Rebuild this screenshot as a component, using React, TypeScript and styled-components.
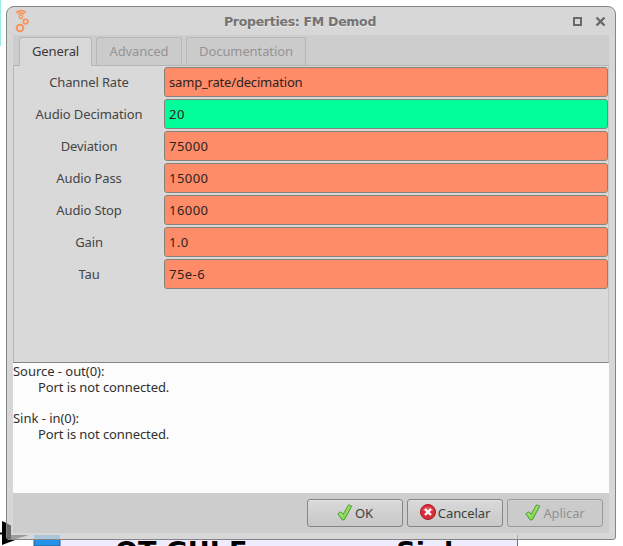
import React from 'react';
import styled, { createGlobalStyle } from 'styled-components';

const Global = createGlobalStyle`
  * { box-sizing: border-box; }
  body { margin: 0; background: #fff; overflow: hidden; font-family: "Noto Sans", sans-serif; }
`;

const Desktop = styled.div`
  position: relative;
  width: 623px;
  height: 546px;
  padding: 6px 7px 5px 6px;
  overflow: hidden;
  background: #fff;
`;

const Canvas = styled.svg`
  position: absolute;
  inset: 0;
  pointer-events: none;
`;

const BlockTitle = styled.span`
  position: absolute;
  left: 115px;
  top: 537px;
  font: bold 27px/30px "DejaVu Sans", sans-serif;
  letter-spacing: -0.03px;
  white-space: pre;
  color: #000;
`;

const Window = styled.section`
  position: relative;
  display: flex;
  flex-direction: column;
  width: 610px;
  height: 534px;
  padding: 0 6px 6px;
  border: 1px solid #858585;
  border-radius: 8px 8px 3px 3px;
  background: #d7d7d7;
`;

const TitleBar = styled.header`
  display: flex;
  align-items: center;
  height: 28px;
  flex: none;
`;

const AppIcon = styled.svg`
  flex: none;
  width: 20px;
  height: 24px;
`;

const Title = styled.h1`
  flex: 1;
  margin: 0;
  padding: 1px 4px 0 0;
  text-align: center;
  font: bold 12.5px/20px "DejaVu Sans", sans-serif;
  letter-spacing: -0.28px;
  color: #737373;
  text-shadow: 0 1px 0 #e8e8e8;
`;

const WindowControls = styled.svg`
  flex: none;
  width: 38px;
  height: 16px;
`;

const Tabs = styled.nav`
  display: flex;
  align-items: flex-end;
  gap: 4px;
  flex: none;
  height: 31px;
  padding-left: 6px;
  background: #cdcdcd;
  border-bottom: 1px solid #b5b5b5;
`;

const Tab = styled.button<{ $active?: boolean; $width: number }>`
  width: ${p => p.$width}px;
  height: ${p => (p.$active ? 29 : 28)}px;
  margin-bottom: ${p => (p.$active ? -1 : 0)}px;
  padding: 0 0 2px;
  border: 1px solid #b7b7b7;
  border-bottom: 0;
  border-radius: 3px 3px 0 0;
  background: ${p => (p.$active ? '#d9d9d9' : '#cbcbcb')};
  color: ${p => (p.$active ? '#393939' : '#949494')};
  font: 13px/20px "Noto Sans", sans-serif;
  letter-spacing: -0.1px;
`;

const Form = styled.div`
  display: flex;
  flex-direction: column;
  gap: 2px;
  flex: none;
  height: 297px;
  padding: 1px 0 0;
  border-left: 1px solid #b7b7b7;
  border-right: 1px solid #c4c4c4;
  border-bottom: 1px solid #858585;
  background: #d9d9d9;
`;

const Field = styled.label`
  display: grid;
  grid-template-columns: 150px 444px;
  height: 30px;
  align-items: center;
`;

const Label = styled.span`
  padding-bottom: 1px;
  text-align: center;
  font-size: 13px;
  line-height: 20px;
  letter-spacing: -0.12px;
  color: #454545;
`;

const Entry = styled.input<{ $fill: string; $numeric: boolean }>`
  width: 444px;
  height: 30px;
  margin: 0;
  padding: 0 4px 1px;
  border: 1px solid #86837c;
  border-radius: 3px;
  outline: none;
  background: ${p => p.$fill};
  color: #2d221d;
  font: 13px/20px "Noto Sans", sans-serif;
  letter-spacing: ${p => (p.$numeric ? 0.45 : -0.18)}px;
`;

const Messages = styled.div`
  flex: none;
  height: 130px;
  padding-top: 1px;
  background: #fcfcfc;
  color: #303030;
  font-size: 13px;
  line-height: 15.7px;
`;

const Message = styled.p<{ $indent?: boolean }>`
  margin: 0;
  padding-left: ${p => (p.$indent ? 25 : 0)}px;
  min-height: 15.7px;
  letter-spacing: ${p => (p.$indent ? -0.1 : -0.04)}px;
`;

const Actions = styled.footer`
  display: flex;
  justify-content: flex-end;
  gap: 4px;
  flex: 1;
  padding: 6px 6px 0;
  background: #cdcdcd;
`;

const ActionButton = styled.button<{ $muted?: boolean }>`
  display: flex;
  align-items: center;
  justify-content: center;
  gap: 2px;
  width: 96px;
  height: 28px;
  padding: 0;
  border: 1px solid ${p => (p.$muted ? '#999' : '#858585')};
  border-radius: 3px;
  background: ${p => (p.$muted ? '#cbcbcb' : 'linear-gradient(#d9d9d9, #c8c8c8)')};
  box-shadow: inset 0 1px 0 ${p => (p.$muted ? '#d2d2d2' : '#e1e1e1')};
  color: ${p => (p.$muted ? '#929292' : '#3e3e3e')};
  font: 13px/20px "Noto Sans", sans-serif;
  letter-spacing: -0.1px;
`;

const Glyph = styled.svg`
  flex: none;
  width: 16px;
  height: 18px;
`;

const CheckGlyph = () => (
  <Glyph viewBox="0 0 16 18">
    <defs>
      <linearGradient id="leaf" x1="0" y1="0" x2="1" y2="1">
        <stop offset="0" stopColor="#c8f79a" />
        <stop offset="1" stopColor="#5fc62a" />
      </linearGradient>
    </defs>
    <path d="M.9 9.8 3.8 7.8 6.1 10.4 11.6.9 14.7 2.2 7.4 15.7 5.2 16Z" fill="url(#leaf)" stroke="#4d9a2c" strokeLinejoin="round" />
  </Glyph>
);

const CancelGlyph = () => (
  <Glyph viewBox="0 0 16 18">
    <circle cx="8" cy="8" r="7.5" fill="#d52f3b" stroke="#a91a25" />
    <path d="M2.3 6.5a6 5 0 0 1 11.4 0Q8 8.5 2.3 6.5" fill="#ed6b6f" opacity=".65" />
    <path d="m5 5 6 6m0-6-6 6" stroke="#fff" strokeWidth="2.4" />
  </Glyph>
);

const CORAL = '#ff8c69';
const fields = [
  { label: 'Channel Rate', value: 'samp_rate/decimation', fill: CORAL },
  { label: 'Audio Decimation', value: '20', fill: '#00ff99' },
  { label: 'Deviation', value: '75000', fill: CORAL },
  { label: 'Audio Pass', value: '15000', fill: CORAL },
  { label: 'Audio Stop', value: '16000', fill: CORAL },
  { label: 'Gain', value: '1.0', fill: CORAL },
  { label: 'Tau', value: '75e-6', fill: CORAL },
];

export default function App() {
  return (
    <Desktop>
      <Global />
      <Canvas width="623" height="546">
        <path d="M0 0h1v46H0z" fill="#98efe8" />
        <path d="M34 535h483v11H34z" fill="#f0ecff" />
        <path d="M517.5 535v11" stroke="#6c6980" />
        <path d="M34 535h26v11H34z" fill="#2492ed" stroke="#315a8d" />
        <path d="M0 533.5h3" stroke="#000" strokeWidth="2" />
        <path d="M2 521 31 534 2 545Z" fill="#000" />
      </Canvas>
      <BlockTitle>QT GUI Frequency Sink</BlockTitle>
      <Window>
        <TitleBar>
          <AppIcon viewBox="0 0 20 24" fill="none" stroke="#f8935a">
            <path d="M3 3.8Q8-.6 13 3.8M5 5.4Q8 3 11 5.4" strokeWidth="1.7" />
            <circle cx="8" cy="7.8" r="1.7" strokeWidth="1.4" />
            <circle cx="12.6" cy="12.6" r="2.3" strokeWidth="1.7" />
            <circle cx="7" cy="19" r="3.3" strokeWidth="2.1" />
          </AppIcon>
          <Title>Properties: FM Demod</Title>
          <WindowControls viewBox="0 0 38 16" fill="none" stroke="#696969" strokeWidth="2">
            <path d="M3 5h7v7H3z" />
            <path d="m25.5 4.5 8 8m0-8-8 8" strokeWidth="2.4" />
          </WindowControls>
        </TitleBar>
        <Tabs>
          <Tab $active $width={73}>General</Tab>
          <Tab $width={86}>Advanced</Tab>
          <Tab $width={120}>Documentation</Tab>
        </Tabs>
        <Form>
          {fields.map(f => (
            <Field key={f.label}>
              <Label>{f.label}</Label>
              <Entry $fill={f.fill} $numeric={/^\d/.test(f.value)} defaultValue={f.value} />
            </Field>
          ))}
        </Form>
        <Messages>
          <Message>Source - out(0):</Message>
          <Message $indent>Port is not connected.</Message>
          <Message />
          <Message>Sink - in(0):</Message>
          <Message $indent>Port is not connected.</Message>
        </Messages>
        <Actions>
          <ActionButton><CheckGlyph />OK</ActionButton>
          <ActionButton><CancelGlyph />Cancelar</ActionButton>
          <ActionButton $muted><CheckGlyph />Aplicar</ActionButton>
        </Actions>
      </Window>
      {/* Canvas shapes showing through the translucent window frame */}
      <Canvas width="623" height="546">
        <path d="M7 523.5 11 525.5V539H7Z" fill="#000" opacity=".5" />
        <path d="M11 535H29L16 539H11Z" fill="#000" opacity=".28" />
        <path d="M34 535h26v4H34z" fill="#2492ed" opacity=".25" />
        <path d="M517.5 535v4" stroke="#6c6980" opacity=".4" />
      </Canvas>
    </Desktop>
  );
}
